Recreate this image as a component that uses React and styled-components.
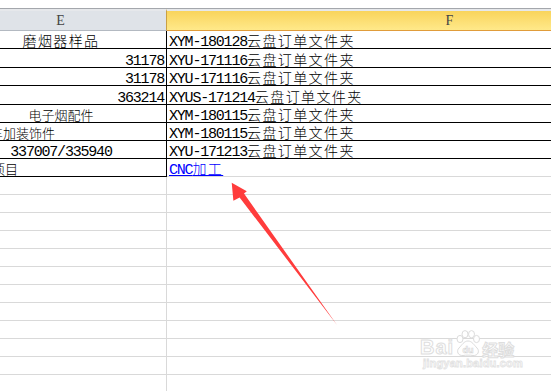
import React from 'react';
import styled, { createGlobalStyle } from 'styled-components';

const GlobalStyle = createGlobalStyle`
  html, body { margin: 0; padding: 0; background: #fff; overflow: hidden; }
  #root { width: 551px; height: 391px; }
`;

const Page = styled.div`
  position: relative;
  width: 551px;
  height: 391px;
  overflow: hidden;
  background: #fff;
`;

const TopStrip = styled.div`
  height: 8px;
  border-bottom: 1px solid #a4a7ac;
  background: #fff;
`;

/* sheet scrolled so that column E is partly out of view on the left */
const Sheet = styled.div`
  display: grid;
  grid-template-columns: 212px 566px;
  margin-left: -45px;
`;

const ColHead = styled.div`
  box-sizing: border-box;
  height: 22px;
  border-top: 2px solid #e6e8eb;
  display: flex;
  align-items: center;
  justify-content: center;
  font-family: "Liberation Serif", serif;
  font-size: 14px;
  color: #444;
  background: ${p => (p.$active ? 'linear-gradient(#f9d45c, #ffe98a)' : '#dfe3e8')};
  border-bottom: 1px solid ${p => (p.$active ? '#e09c3a' : '#b3b9c1')};
  border-right: 1px solid ${p => (p.$active ? 'transparent' : '#c9a044')};
  padding-top: 1px;
`;

const Cell = styled.div`
  box-sizing: border-box;
  height: ${p => p.$h}px;
  display: flex;
  align-items: flex-end;
  justify-content: ${p =>
    p.$align === 'right' ? 'flex-end' : p.$align === 'center' ? 'center' : 'flex-start'};
  padding: 0 ${p => (p.$align === 'right' ? 2 : 0)}px 0 ${p => p.$indent ?? 1}px;
  border-bottom: 1px solid ${p => (p.$grid ? '#d9d9d9' : '#000')};
  border-right: ${p => (p.$edge ? `1px solid ${p.$edgeGrid ? '#d9d9d9' : '#000'}` : 'none')};
  white-space: nowrap;
  overflow: visible;
  color: ${p => (p.$link ? '#0000ff' : '#000')};
  text-decoration: ${p => (p.$link ? 'underline' : 'none')};
  text-underline-offset: 1px;
`;

const Line = styled.span`
  display: inline-block;
  line-height: 15px;
  height: 15px;
`;

const Latin = styled.span`
  font-family: "Liberation Mono", monospace;
  font-size: 15px;
  letter-spacing: -1.2px;
`;

const Han = styled.span`
  font-family: "Noto Sans CJK SC", sans-serif;
  font-weight: 300;
  font-size: ${p => (p.$small ? 13 : 14)}px;
  letter-spacing: ${p => (p.$small ? 0 : 1.4)}px;
`;

const Arrow = styled.svg`
  position: absolute;
  left: 0;
  top: 0;
  pointer-events: none;
`;

const Mark = styled.div`
  position: absolute;
  left: 420px;
  top: 330px;
  display: flex;
  flex-direction: column;
  align-items: flex-start;
  gap: 1px;
  pointer-events: none;
`;

const MarkRow = styled.div`
  display: flex;
  align-items: flex-end;
  gap: 1px;
`;

const MarkWord = styled.span`
  font-family: ${p => (p.$cjk ? '"Noto Sans CJK SC", sans-serif' : '"Liberation Sans", sans-serif')};
  font-weight: 700;
  font-size: ${p => (p.$cjk ? 16 : 20)}px;
  line-height: 1;
  color: #fff;
  -webkit-text-stroke: 1px #dedede;
  letter-spacing: ${p => (p.$cjk ? 0 : 1)}px;
`;

const MarkSite = styled.span`
  font-family: "Liberation Sans", sans-serif;
  font-weight: 700;
  font-size: 11px;
  line-height: 1;
  color: #fff;
  -webkit-text-stroke: 0.8px #e2e2e2;
  padding-left: 3px;
  letter-spacing: 0.2px;
`;

const Paw = () => (
  <svg width="26" height="27" viewBox="0 0 26 27">
    <g fill="#fff" stroke="#dcdcdc" strokeWidth="1">
      <ellipse cx="5" cy="9" rx="3" ry="3.6" />
      <ellipse cx="10" cy="4.2" rx="3" ry="3.6" />
      <ellipse cx="16.5" cy="4.2" rx="3" ry="3.6" />
      <ellipse cx="21.5" cy="9" rx="3" ry="3.6" />
      <path d="M13 11 C9 11 7 15 4 18 C1 21 3 26 8 25.5 C11 25 15 25 18 25.5 C23 26 25 21 22 18 C19 15 17 11 13 11 Z" />
    </g>
    <text x="13" y="23" textAnchor="middle" fontFamily="Liberation Sans, sans-serif" fontWeight="700" fontSize="9" fill="#fff" stroke="#d6d6d6" strokeWidth="0.6">du</text>
  </svg>
);

const rows = [
  { e: '磨烟器样品', ea: 'center', f: 'XYM-180128云盘订单文件夹', h: 18 },
  { e: '31178', ea: 'right', f: 'XYU-171116云盘订单文件夹', h: 19 },
  { e: '31178', ea: 'right', f: 'XYU-171116云盘订单文件夹', h: 18 },
  { e: '363214', ea: 'right', f: 'XYUS-171214云盘订单文件夹', h: 19 },
  { e: '电子烟配件', ea: 'center', small: true, f: 'XYM-180115云盘订单文件夹', h: 18 },
  { e: '汽车加装饰件', ea: 'left', small: true, indent: 22, f: 'XYM-180115云盘订单文件夹', h: 18 },
  { e: '337007/335940', ea: 'center', f: 'XYU-171213云盘订单文件夹', h: 18 },
  { e: '其他项目', ea: 'left', small: true, indent: 11, f: 'CNC加工', link: true, fGrid: true, h: 18 },
];

const blankRows = Array.from({ length: 12 }, (_, i) => i);

function Text({ value, small }) {
  const parts = value.split(/([\u2E80-\u9FFF\uFF00-\uFFEF]+)/).filter(Boolean);
  return (
    <Line>
      {parts.map((p, i) =>
        /[\u2E80-\u9FFF\uFF00-\uFFEF]/.test(p) ? (
          <Han key={i} $small={small}>{p}</Han>
        ) : (
          <Latin key={i}>{p}</Latin>
        )
      )}
    </Line>
  );
}

export default function App() {
  return (
    <>
      <GlobalStyle />
      <Page>
        <TopStrip />
        <Sheet>
          <ColHead>E</ColHead>
          <ColHead $active>F</ColHead>
          {rows.map((r, i) => (
            <React.Fragment key={i}>
              <Cell $h={r.h} $align={r.ea} $indent={r.indent} $edge>
                <Text value={r.e} small={r.small} />
              </Cell>
              <Cell $h={r.h} $grid={r.fGrid} $link={r.link} $indent={2}>
                <Text value={r.f} />
              </Cell>
            </React.Fragment>
          ))}
          {blankRows.map(i => (
            <React.Fragment key={`b${i}`}>
              <Cell $h={18} $grid $edge $edgeGrid />
              <Cell $h={18} $grid />
            </React.Fragment>
          ))}
        </Sheet>
        <Arrow width="551" height="391" viewBox="0 0 551 391">
          <polygon
            points="231.7,182.8 246.8,191.2 244,193.6 337,325 239.6,197.4 233.4,200.8"
            fill="#ff3c3c"
          />
        </Arrow>
        <Mark>
          <MarkRow>
            <MarkWord>Bai</MarkWord>
            <Paw />
            <MarkWord $cjk>经验</MarkWord>
          </MarkRow>
          <MarkSite>jingyan.baidu.com</MarkSite>
        </Mark>
      </Page>
    </>
  );
}
